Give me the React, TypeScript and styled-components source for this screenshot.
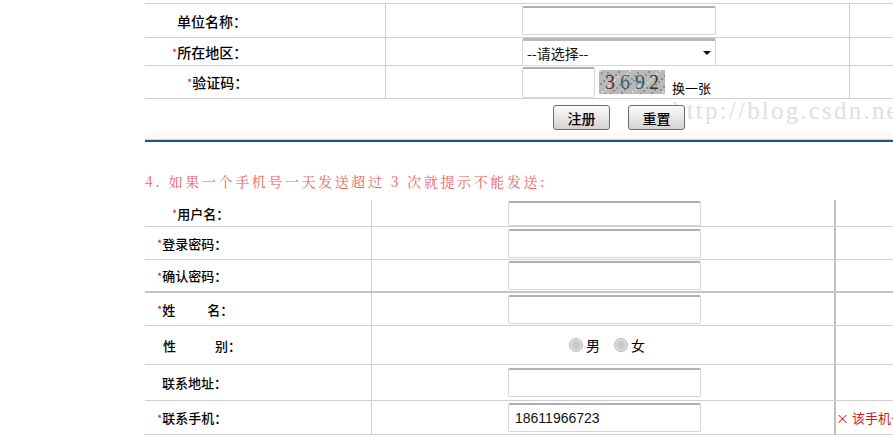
import React from 'react'
import styled, { createGlobalStyle } from 'styled-components'

const GlobalStyle = createGlobalStyle`
  html, body {
    margin: 0;
    padding: 0;
    background: #fff;
    overflow: hidden;
  }
  body {
    font-family: "Noto Sans CJK SC", "Liberation Sans", sans-serif;
    font-size: 13px;
    color: #000;
  }
`

const Page = styled.div`
  width: 893px;
  height: 436px;
  overflow: hidden;
`

const Content = styled.div`
  margin-left: 145px;
  width: 760px;
  padding-top: 3px;
`

const Table = styled.div<{ $label: number; $field: number; $top?: boolean; $size: number }>`
  display: grid;
  grid-template-columns: ${(p) => p.$label}px ${(p) => p.$field}px 1fr;
  border-top: ${(p) => (p.$top ? '1px solid #cfcfcf' : 'none')};
  font-size: ${(p) => p.$size}px;
`

const Cell = styled.div<{ $h: number; $thick?: boolean; $strong?: boolean }>`
  height: ${(p) => p.$h}px;
  box-sizing: border-box;
  border-bottom: ${(p) => (p.$thick ? '2px solid #c4c4c4' : '1px solid #cfcfcf')};
  border-right: ${(p) => (p.$strong ? '2px solid #c0c0c0' : '1px solid #cfcfcf')};
  display: flex;
  align-items: center;
`

const LabelCell = styled(Cell)<{ $indent: number }>`
  padding-left: ${(p) => p.$indent}px;
  white-space: pre;
  font-weight: 500;
`

const FieldCell = styled(Cell)<{ $center?: boolean }>`
  padding-left: ${(p) => (p.$center ? 0 : 136)}px;
  justify-content: ${(p) => (p.$center ? 'center' : 'flex-start')};
  gap: 4px;
`

const TailCell = styled(Cell)`
  border-right: none;
  overflow: hidden;
`

const Star = styled.span`
  color: #d0202a;
  font-size: 11px;
  font-weight: 400;
`

const Spacer = styled.span<{ $w: number }>`
  display: inline-block;
  width: ${(p) => p.$w}px;
`

const Input = styled.div<{ $w: number; $h: number }>`
  width: ${(p) => p.$w}px;
  height: ${(p) => p.$h}px;
  box-sizing: border-box;
  border: 1px solid #d6d6d6;
  border-top: 2px solid #b0b0b0;
  border-radius: 2px;
  background: #fff;
  font-family: "Liberation Sans", Arial, sans-serif;
  font-size: 14px;
  padding-left: 6px;
  display: flex;
  align-items: center;
  color: #111;
`

const Select = styled(Input)`
  position: relative;
  padding-left: 4px;
  font-size: 14px;
  font-family: "Noto Sans CJK SC", sans-serif;
  border-top: 3px solid #b8b8b8;
`

const Caret = styled.span`
  position: absolute;
  right: 4px;
  top: 10px;
  border-left: 4px solid transparent;
  border-right: 4px solid transparent;
  border-top: 4px solid #111;
`

const Captcha = styled.svg`
  display: block;
`

const Swap = styled.span`
  margin-top: 10px;
  margin-left: 3px;
  font-size: 13px;
`

const ButtonRow = styled.div`
  position: relative;
  height: 31px;
  display: flex;
  gap: 18px;
  padding-left: 408px;
  align-items: flex-end;
`

const Button = styled.div`
  width: 57px;
  height: 25px;
  box-sizing: border-box;
  border: 1px solid #6d6d6d;
  border-radius: 3px;
  background: linear-gradient(#fbfbfb, #e3e3e3 60%, #d2d2d2);
  display: flex;
  align-items: center;
  justify-content: center;
  font-size: 14px;
  font-weight: 500;
  position: relative;
  z-index: 1;
`

const Watermark = styled.div`
  position: absolute;
  left: 527px;
  top: -2px;
  font-family: "Liberation Serif", serif;
  font-size: 25px;
  color: #e0e0e0;
  letter-spacing: 2.2px;
  white-space: nowrap;
`

const Cream = styled.div`
  height: 6px;
  margin-top: 3px;
  background: #fdf9ee;
`

const Rule = styled.div`
  height: 3px;
  background: #1b578e;
  border-top: 1px solid #c9d6e2;
  box-sizing: border-box;
`

const Heading = styled.div`
  margin: 30px 0 9px;
  font-family: "Noto Serif CJK SC", "Noto Sans CJK SC", serif;
  font-size: 14px;
  letter-spacing: 2.6px;
  color: #f05f5f;
  height: 19px;
  line-height: 19px;
`

const Radios = styled.div`
  display: flex;
  align-items: center;
  gap: 14px;
  margin-left: 8px;
`

const Radio = styled.span`
  display: inline-block;
  width: 12px;
  height: 12px;
  border-radius: 50%;
  border: 1px solid #b4b4b4;
  background: radial-gradient(circle, #c8c8c8 40%, #ececec 75%);
  margin-right: 3px;
`

const Gender = styled.span`
  display: inline-flex;
  align-items: center;
  font-size: 14px;
`

const Error = styled.span`
  color: #d21a1a;
  font-size: 13px;
  white-space: nowrap;
`

type Row = {
  label: string
  star: boolean
  indent: number
  h: number
  thick?: boolean
  gap?: number
}

const topRows: Row[] = [
  { label: '单位名称：', star: false, indent: 32, h: 34 },
  { label: '所在地区：', star: true, indent: 27, h: 28 },
  { label: '验证码：', star: true, indent: 42, h: 33 },
]

const bottomRows: Row[] = [
  { label: '用户名：', star: true, indent: 27, h: 27 },
  { label: '登录密码：', star: true, indent: 12, h: 33 },
  { label: '确认密码：', star: true, indent: 12, h: 33, thick: true },
  { label: '姓名：', star: true, indent: 12, h: 33, gap: 32 },
  { label: '性别：', star: false, indent: 18, h: 39, gap: 39 },
  { label: '联系地址：', star: false, indent: 17, h: 36 },
  { label: '联系手机：', star: true, indent: 12, h: 34 },
]

const Label = ({ row }: { row: Row }) => (
  <>
    {row.star && <Star>*</Star>}
    {row.gap ? (
      <>
        {row.label[0]}
        <Spacer $w={row.gap} />
        {row.label.slice(1)}
      </>
    ) : (
      row.label
    )}
  </>
)

const CaptchaImage = () => (
  <Captcha width="66" height="24" viewBox="0 0 66 24">
    <rect width="66" height="24" fill="#b9b9b9" />
    {Array.from({ length: 60 }).map((_, i) => (
      <rect
        key={i}
        x={(i * 37) % 66}
        y={(i * 13) % 24}
        width="2"
        height="2"
        fill={i % 3 ? '#8f8f8f' : '#d8d8d8'}
      />
    ))}
    <text x="6" y="19" fontSize="20" fontFamily="Liberation Serif, serif" fill="#6b1f2b">3</text>
    <text x="21" y="19" fontSize="20" fontFamily="Liberation Serif, serif" fill="#4c5a6a">6</text>
    <text x="36" y="19" fontSize="20" fontFamily="Liberation Serif, serif" fill="#2f5d6f">9</text>
    <text x="50" y="19" fontSize="20" fontFamily="Liberation Serif, serif" fill="#333">2</text>
  </Captcha>
)

const topField = (i: number) => {
  if (i === 0) return <Input $w={194} $h={29} />
  if (i === 1)
    return (
      <Select $w={194} $h={28}>
        --请选择--
        <Caret />
      </Select>
    )
  return (
    <>
      <Input $w={73} $h={31} />
      <CaptchaImage />
      <Swap>换一张</Swap>
    </>
  )
}

const App = () => (
  <Page>
    <GlobalStyle />
    <Content>
      <Table $label={241} $field={464} $top $size={14}>
        {topRows.map((r, i) => (
          <React.Fragment key={r.label}>
            <LabelCell $h={r.h} $indent={r.indent}>
              <Label row={r} />
            </LabelCell>
            <FieldCell $h={r.h}>{topField(i)}</FieldCell>
            <TailCell $h={r.h} />
          </React.Fragment>
        ))}
      </Table>
      <ButtonRow>
        <Watermark>http://blog.csdn.net/</Watermark>
        <Button>注册</Button>
        <Button>重置</Button>
      </ButtonRow>
      <Cream />
      <Rule />
      <Heading>4. 如果一个手机号一天发送超过 3 次就提示不能发送:</Heading>
      <Table $label={227} $field={464} $size={13}>
        {bottomRows.map((r, i) => (
          <React.Fragment key={r.label}>
            <LabelCell $h={r.h} $indent={r.indent} $thick={r.thick}>
              <Label row={r} />
            </LabelCell>
            <FieldCell $h={r.h} $thick={r.thick} $strong $center={i === 4}>
              {i === 4 ? (
                <Radios>
                  <Gender>
                    <Radio />男
                  </Gender>
                  <Gender>
                    <Radio />女
                  </Gender>
                </Radios>
              ) : (
                <Input $w={193} $h={i === 0 ? 25 : 29}>
                  {i === 6 ? '18611966723' : ''}
                </Input>
              )}
            </FieldCell>
            <TailCell $h={r.h} $thick={r.thick}>
              {i === 6 && <Error>× 该手机号码今天发送次数已超过3次</Error>}
            </TailCell>
          </React.Fragment>
        ))}
      </Table>
    </Content>
  </Page>
)

export default App
